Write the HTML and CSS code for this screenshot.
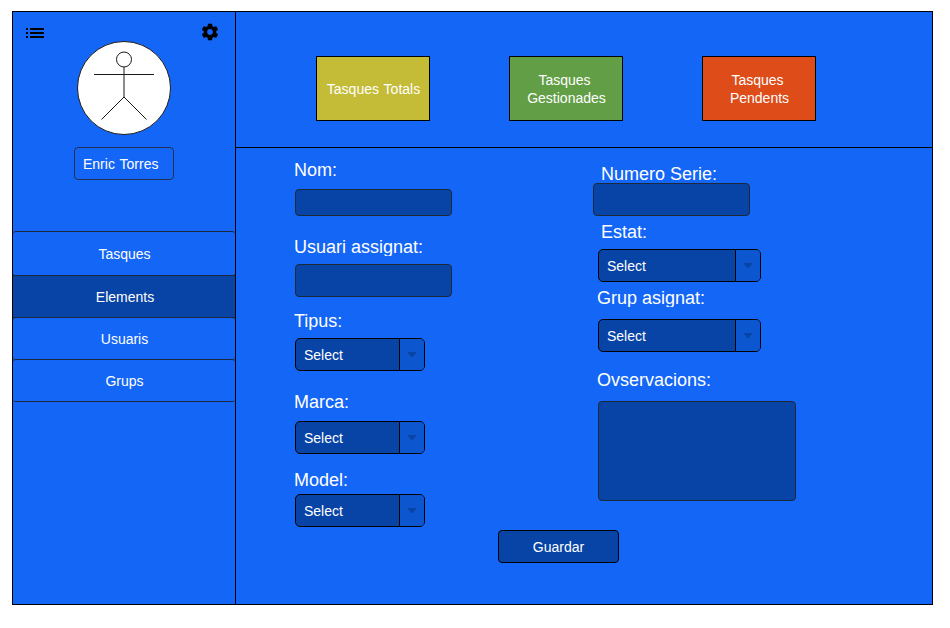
FILE: index.html
```html
<!DOCTYPE html>
<html lang="ca">
<head>
<meta charset="utf-8">
<title>Elements</title>
<link rel="stylesheet" href="styles.css">
</head>
<body>
<div class="app">
  <aside class="sidebar">
    <div class="tools">
      <svg class="list-icon" width="18" height="10" viewBox="0 0 18 10"><path d="M0 0h2v2H0zM4 0h14v2H4zM0 4h2v2H0zM4 4h14v2H4zM0 8h2v2H0zM4 8h14v2H4z"/></svg>
      <svg class="gear-icon" width="20" height="20" viewBox="0 0 24 24"><path d="M19.43 12.98c.04-.32.07-.64.07-.98s-.03-.66-.07-.98l2.11-1.65c.19-.15.24-.42.12-.64l-2-3.46c-.12-.22-.39-.3-.61-.22l-2.49 1c-.52-.4-1.08-.73-1.69-.98l-.38-2.65C14.46 2.18 14.25 2 14 2h-4c-.25 0-.46.18-.49.42l-.38 2.65c-.61.25-1.17.59-1.69.98l-2.49-1c-.23-.09-.49 0-.61.22l-2 3.46c-.13.22-.07.49.12.64l2.11 1.65c-.04.32-.07.65-.07.98s.03.66.07.98l-2.11 1.65c-.19.15-.24.42-.12.64l2 3.46c.12.22.39.3.61.22l2.49-1c.52.4 1.08.73 1.69.98l.38 2.65c.03.24.24.42.49.42h4c.25 0 .46-.18.49-.42l.38-2.65c.61-.25 1.17-.59 1.69-.98l2.49 1c.23.09.49 0 .61-.22l2-3.46c.12-.22.07-.49-.12-.64l-2.11-1.65zM12 15.500c-1.930 0-3.500-1.570-3.500-3.500s1.570-3.500 3.500-3.500 3.500 1.570 3.500 3.500-1.570 3.500-3.500 3.500z"/></svg>
    </div>
    <svg class="avatar" width="94" height="94" viewBox="0 0 94 94">
      <circle cx="47" cy="47" r="46.500" fill="#fff"/>
      <circle cx="47" cy="18.500" r="7.500"/>
      <path d="M47 26v30M17 33.500h60M47 56L24.500 78.500M47 56l22.500 22.500"/>
    </svg>
    <div class="user-name">Enric Torres</div>
    <nav class="menu">
      <a class="menu-item tall">Tasques</a>
      <a class="menu-item active">Elements</a>
      <a class="menu-item">Usuaris</a>
      <a class="menu-item">Grups</a>
    </nav>
  </aside>
  <main class="main">
    <header class="stats">
      <div class="stat total"><span>Tasques Totals</span></div>
      <div class="stat done"><span class="first">Tasques</span><span>Gestionades</span></div>
      <div class="stat pending"><span class="first">Tasques</span><span>Pendents</span></div>
    </header>
    <form class="form">
      <div class="columns">
        <div class="column left">
          <label class="label nom">Nom:</label>
          <div class="input short"></div>
          <label class="label usuari">Usuari assignat:</label>
          <div class="input"></div>
          <label class="label tipus">Tipus:</label>
          <div class="select"><span>Select</span><i><svg width="8" height="5" viewBox="0 0 8 5"><path d="M0 0h8v1L4.500 5h-1L0 1z"/></svg></i></div>
          <label class="label marca">Marca:</label>
          <div class="select"><span>Select</span><i><svg width="8" height="5" viewBox="0 0 8 5"><path d="M0 0h8v1L4.500 5h-1L0 1z"/></svg></i></div>
          <label class="label model">Model:</label>
          <div class="select"><span>Select</span><i><svg width="8" height="5" viewBox="0 0 8 5"><path d="M0 0h8v1L4.500 5h-1L0 1z"/></svg></i></div>
        </div>
        <div class="column right">
          <label class="label serie">Numero Serie:</label>
          <div class="input serial"></div>
          <label class="label estat">Estat:</label>
          <div class="select wide"><span>Select</span><i><svg width="8" height="5" viewBox="0 0 8 5"><path d="M0 0h8v1L4.500 5h-1L0 1z"/></svg></i></div>
          <label class="label grup">Grup asignat:</label>
          <div class="select wide"><span>Select</span><i><svg width="8" height="5" viewBox="0 0 8 5"><path d="M0 0h8v1L4.500 5h-1L0 1z"/></svg></i></div>
          <label class="label notes">Ovservacions:</label>
          <div class="input area"></div>
        </div>
      </div>
      <button class="save" type="button">Guardar</button>
    </form>
  </main>
</div>
</body>
</html>
```
FILE: styles.css
```css
* { box-sizing: border-box; }
body {
  margin: 0;
  padding: 11px 0 0 12px;
  background: #fff;
  font: 14px/16px "Liberation Sans", Arial, sans-serif;
  color: #fff;
}
.app {
  display: flex;
  width: 921px;
  height: 594px;
  border: 1px solid #000;
  background: #1466f6;
}
.sidebar {
  display: flex;
  flex-direction: column;
  align-items: center;
  width: 223px;
  border-right: 1px solid #000;
}
.tools {
  display: flex;
  justify-content: space-between;
  align-items: flex-start;
  width: 100%;
  height: 29px;
  padding: 9px 15.5px 0 13px;
}
.list-icon { margin-top: 7px; }
.gear-icon { flex: none; margin-top: .5px; }
.avatar {
  flex: none;
  fill: none;
  stroke: #1a1a1a;
  stroke-width: 1;
}
.user-name {
  width: 100px;
  height: 33px;
  margin-top: 12px;
  padding: 8px;
  border: 1px solid #222f4f;
  border-radius: 4px;
  word-spacing: 1px;
}
.menu {
  width: 100%;
  margin-top: 51px;
}
.menu-item {
  display: flex;
  align-items: center;
  justify-content: center;
  height: 43px;
  margin-top: -1px;
  padding-left: 1px;
  border: solid #1b2840;
  border-width: 1px 0;
  border-radius: 3px;
}
.menu-item.tall { height: 45px; margin-top: 0; }
.menu-item.active {
  padding-left: 2px;
  border-radius: 0;
  background: #0744a6;
}
.main { flex: 1; }
.stats {
  display: flex;
  gap: 79px;
  height: 136px;
  padding: 44px 0 0 80px;
  border-bottom: 1px solid #000;
}
.stat {
  display: flex;
  flex-direction: column;
  align-items: center;
  justify-content: center;
  width: 114px;
  height: 65px;
  padding-left: 1px;
  border: 1px solid #000;
  line-height: 18px;
  word-spacing: 1px;
}
.total { background: #c4bb37; }
.done { background: #629e45; }
.pending { background: #dd4c19; }
.first { margin-right: 4px; }
.form { display: flex; flex-direction: column; }
.columns {
  display: flex;
  height: 353px;
  padding-left: 58px;
}
.column { display: flex; flex-direction: column; align-items: flex-start; }
.column > * { flex: none; }
.left { width: 299px; padding-top: 12px; }
.right { padding-top: 16px; }
.label {
  height: 19px;
  overflow: hidden;
  font-size: 18px;
  line-height: 20px;
  white-space: nowrap;
}
.input {
  width: 157px;
  height: 33px;
  margin-left: 1px;
  border: 1px solid #1d2838;
  border-radius: 4px;
  background: #0744a6;
}
.nom { margin-bottom: 10px; }
.short { height: 27px; }
.usuari { margin: 21px 0 8px; }
.tipus { margin: 14px 0 8px; }
.marca { margin: 21px 0 10px; }
.model { margin: 16px 0 5px; }
.select {
  display: flex;
  width: 130px;
  height: 33px;
  margin-left: 1px;
  overflow: hidden;
  border: 1px solid #000;
  border-radius: 5px;
  background: #0744a6;
}
.select span { flex: 1; padding: 8px; }
.select i {
  width: 25px;
  padding: 13px 0 0 8px;
  border-left: 1px solid #000;
  background: #0c57cf;
  line-height: 0;
}
.select svg { fill: #0744a6; }
.select.wide { width: 163px; margin-left: 5px; }
.serie, .estat { margin-left: 8px; }
.serial { margin-left: 0; }
.estat { margin-top: 6px; margin-bottom: 8px; }
.grup { margin: 6px 0 12px 4px; }
.notes { margin: 18px 0 12px 4px; }
.area { width: 198px; height: 100px; margin-left: 5px; }
.save {
  width: 121px;
  height: 33px;
  margin: 29px 0 0 262px;
  padding: 0;
  border: 1px solid #000;
  border-radius: 4px;
  background: #0744a6;
  color: #fff;
  font: inherit;
}
```
